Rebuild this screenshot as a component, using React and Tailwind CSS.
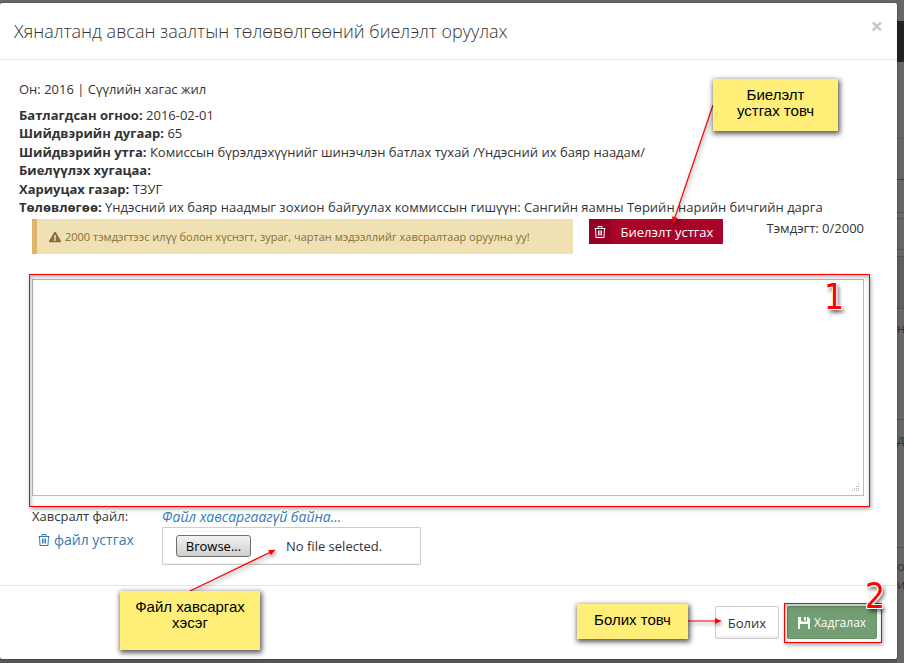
import React, { useRef } from "react";
import { FaExclamationTriangle } from "react-icons/fa";

const details = [
  ["Батлагдсан огноо:", "2016-02-01"],
  ["Шийдвэрийн дугаар:", "65"],
  ["Шийдвэрийн утга:", "Комиссын бүрэлдэхүүнийг шинэчлэн батлах тухай /Үндэсний их баяр наадам/"],
  ["Биелүүлэх хугацаа:", ""],
  ["Хариуцах газар:", "ТЗУГ"],
  ["Төлөвлөгөө:", "Үндэсний их баяр наадмыг зохион байгуулах коммиссын гишүүн: Сангийн яамны Төрийн нарийн бичгийн дарга"],
];

function TrashIcon({ className }) {
  return (
    <svg viewBox="0 0 12 12" className={className} fill="none" stroke="currentColor" aria-hidden="true">
      <path d="M0.5 2.5h11M4 2.5v-2h4v2M1.5 2.5l0.5 9h8l0.5-9M4.5 4.5v5M6 4.5v5M7.5 4.5v5" />
    </svg>
  );
}

function SaveIcon() {
  return (
    <svg viewBox="0 0 12 12" className="h-3 w-3" fill="currentColor" aria-hidden="true">
      <path fillRule="evenodd" d="M0 0h3v4.5h6V0h1l2 2v10h-2V7H2v5H0zM6 0h2v3.5H6z" />
    </svg>
  );
}

function Note({ className, children }) {
  return (
    <div className={"absolute bg-[#ffee77] pt-2 text-center font-['Liberation_Sans',sans-serif] text-[15px] leading-4 text-black shadow-[1px_2px_5px_1px_rgba(0,0,0,0.65)] " + className}>
      {children}
    </div>
  );
}

function Arrow({ x1, y1, x2, y2, className }) {
  const angle = (Math.atan2(y2 - y1, x2 - x1) * 180) / Math.PI;
  return (
    <svg
      className={"pointer-events-none absolute overflow-visible drop-shadow-[1px_2px_2px_rgba(0,0,0,0.5)] " + className}
      aria-hidden="true"
    >
      <path d={`M${x1} ${y1}L${x2} ${y2}`} stroke="#f00" strokeWidth="1.2" />
      <path d="M0 0L-6 -3V3z" fill="#f00" transform={`translate(${x2} ${y2}) rotate(${angle})`} />
    </svg>
  );
}

function Step({ className, children }) {
  return (
    <span
      className={
        "absolute font-['DejaVu_Sans_Condensed','DejaVu_Sans',sans-serif] text-[35px] leading-9 font-normal text-[#f00] [text-shadow:1px_0_0_white,-1px_0_0_white,0_1px_0_white,0_-1px_0_white,1px_1px_0_white,-1px_-1px_0_white,1px_-1px_0_white,-1px_1px_0_white,2px_3px_4px_rgba(0,0,0,0.8)] " +
        className
      }
    >
      {children}
    </span>
  );
}

function Backdrop() {
  return (
    <div className="flex w-[7px] flex-col overflow-hidden bg-[#666] text-[13px] leading-[18px] text-[#333]" aria-hidden="true">
      <div className="h-[21px]" />
      <div className="h-[41px] bg-[#222]" />
      <div className="h-[77px] border-b border-[#5a5a5a]" />
      <div className="h-[41px] border-b border-[#444]" />
      <div className="h-[33px] border-b border-[#505050]" />
      <div className="h-[6px] border-b border-[#505050]" />
      <div className="h-[31px] border-b border-[#505050]" />
      <div className="h-[7px] border-b border-[#505050]" />
      <div className="h-[52px] border-b border-[#505050] bg-[#5e5e5e]" />
      <div className="h-[111px] border-b border-[#505050] pt-[10px]">н</div>
      <div className="h-[128px] border-b border-[#505050] pt-[10px]">д</div>
      <div className="flex-1 pt-[9px]">
        о<br />и
      </div>
    </div>
  );
}

export default function App() {
  const fileRef = useRef(null);
  return (
    <div className="flex min-h-screen bg-[#666] font-['Open_Sans',sans-serif] text-[13px] leading-[18px] text-[#333]">
      <div className="flex min-w-0 flex-1 flex-col bg-linear-to-b from-[#686868] to-[#555] pt-[3px] pb-1">
        <section role="dialog" aria-labelledby="dialog-title" className="relative flex-1 rounded-[2px] bg-white shadow-[0_0_2px_rgba(0,0,0,0.5)]">
          <header className="flex items-start justify-between border-b border-[#e5e5e5] pt-4 pr-[14px] pb-4 pl-[14px]">
            <h1 id="dialog-title" className="text-lg leading-6 font-light">
              Хяналтанд авсан заалтын төлөвөлгөөний биелэлт оруулах
            </h1>
            <button type="button" aria-label="Хаах" className="text-[22px] leading-3 font-bold text-[#c8c8c8]">
              ×
            </button>
          </header>

          <div className="pt-5 pr-[33px] pl-[19px]">
            <p>Он: 2016 | Сүүлийн хагас жил</p>
            <dl className="mt-2">
              {details.map(([term, value]) => (
                <div key={term} className="even:pb-px">
                  <dt className="inline font-bold">{term}</dt> <dd className="inline">{value}</dd>
                </div>
              ))}
            </dl>

            <div className="mt-0.5 ml-[13px] flex items-start">
              <div className="flex h-[35px] min-w-0 flex-[0_1_541px] items-center gap-1 border-l-5 border-[#dfb56c] bg-[#efe1b3] pl-3 text-[11px] text-[#8a6d3b]">
                <FaExclamationTriangle className="h-3 w-3 shrink-0" />
                <span>2000 тэмдэгтээс илүү болон хүснэгт, зураг, чартан мэдээллийг хавсралтаар оруулна уу!</span>
              </div>
              <button type="button" className="ml-4 flex h-[25px] w-[134px] items-stretch rounded-[1px] bg-[#a90329] text-white">
                <span className="flex w-[22px] items-center justify-center bg-[#930225]">
                  <TrashIcon className="h-3 w-3" />
                </span>
                <span className="flex-1 self-center text-center whitespace-nowrap">Биелэлт устгах</span>
              </button>
              <output htmlFor="report" className="ml-auto">
                Тэмдэгт: 0/2000
              </output>
            </div>

            <div className="relative mt-[25px] ml-[13px]">
              <textarea
                id="report"
                aria-label="Биелэлт"
                className="block h-[217px] w-full resize-none border border-[#bbb] bg-white p-2 outline-none"
              />
              <svg viewBox="0 0 8 8" className="absolute right-1 bottom-1 h-2 w-2" fill="#aaa" aria-hidden="true">
                <path d="M6 0h1v1H6zM4 2h1v1H4zM6 2h1v1H6zM2 4h1v1H2zM4 4h1v1H4zM6 4h1v1H6zM0 6h1v1H0zM2 6h1v1H2zM4 6h1v1H4zM6 6h1v1H6z" />
              </svg>
              <div className="pointer-events-none absolute -top-[5px] -right-[6px] -bottom-[11px] -left-[3px] border border-[#f00] shadow-[1px_2px_4px_rgba(0,0,0,0.35),inset_1px_2px_4px_rgba(0,0,0,0.3)]" />
              <Step className="top-0 right-5">1</Step>
            </div>

            <div className="mt-[11px] ml-[13px] flex">
              <div className="w-[130px]">
                <label htmlFor="attachment">Хавсралт файл:</label>
                <a href="#delete" className="mt-[5px] ml-1.5 flex items-center gap-1 text-sm leading-5 text-[#337ab7]">
                  <TrashIcon className="h-3 w-3" />
                  файл устгах
                </a>
              </div>
              <div className="w-[259px]">
                <a href="#file" className="block text-sm leading-5 text-[#337ab7] italic">
                  Файл хавсаргаагүй байна...
                </a>
                <div className="flex h-[38px] items-center rounded-[1px] border border-[#ccc] pl-[13px] shadow-[inset_0_-1px_0_#eee]">
                  <button
                    type="button"
                    onClick={() => fileRef.current.click()}
                    className="h-[22px] w-[75px] rounded-[3px] border border-[#707070] bg-linear-to-b from-[#f2f2f2] to-[#cfcfcf] leading-5 text-black"
                  >
                    Browse...
                  </button>
                  <input ref={fileRef} id="attachment" type="file" className="hidden" />
                  <span className="ml-[35px]">No file selected.</span>
                </div>
              </div>
            </div>
          </div>

          <footer className="mt-5 flex justify-end gap-2 border-t border-[#e5e5e5] pt-5 pr-5">
            <button type="button" className="h-[33px] w-16 rounded-[2px] border border-[#ccc] bg-white pt-px shadow-[inset_0_-2px_0_#eee]">
              Болих
            </button>
            <div className="relative">
              <button type="button" className="flex h-[33px] w-[90px] items-center justify-center gap-1 rounded-[2px] border border-[#659265] bg-[#739e73] pt-px text-xs text-white">
                <SaveIcon />
                Хадгалах
              </button>
              <div className="pointer-events-none absolute -top-[3px] -right-[5px] -bottom-1 -left-[3px] border border-[#f00] shadow-[1px_2px_4px_rgba(0,0,0,0.35),inset_1px_2px_4px_rgba(0,0,0,0.3)]" />
              <Step className="-top-7 -right-2">2</Step>
            </div>
          </footer>

          <Arrow className="top-0 right-0 h-full w-[897px]" x1={713} y1={102} x2={673} y2={220} />
          <Arrow className="top-0 left-0 h-full w-[897px]" x1={190} y1={588} x2={275} y2={547} />
          <Arrow className="top-0 right-0 h-full w-[897px]" x1={688} y1={618} x2={721} y2={618} />
          <Note className="top-[76px] right-[59px] h-[52px] w-[125px]">
            Биелэлт
            <br />
            устгах товч
          </Note>
          <Note className="top-[588px] left-[120px] h-[59px] w-[140px]">
            Файл хавсаргах
            <br />
            хэсэг
          </Note>
          <Note className="top-[601px] right-[209px] h-[35px] w-[111px]">Болих товч</Note>
        </section>
      </div>
      <Backdrop />
    </div>
  );
}
